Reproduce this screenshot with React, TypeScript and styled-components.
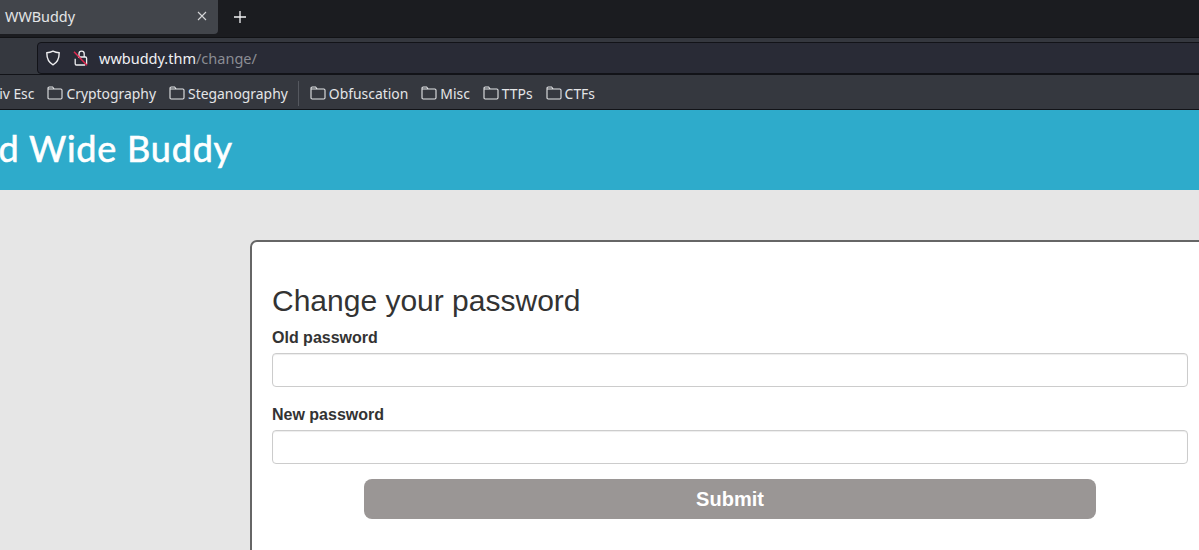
import { createGlobalStyle, styled } from "styled-components";

const GlobalStyle = createGlobalStyle`
  html, body {
    margin: 0;
    padding: 0;
    overflow: hidden;
    background: #e6e6e6;
  }
  * {
    box-sizing: border-box;
  }
`;

const Window = styled.div`
  width: 1199px;
  height: 550px;
  overflow: hidden;
  display: flex;
  flex-direction: column;
`;

const TabStrip = styled.div`
  flex: 0 0 38px;
  background-color: #1b1c20;
  border-bottom: 1px solid #111215;
  display: flex;
  align-items: flex-start;
  font-family: "Noto Sans", sans-serif;
`;

const Tab = styled.div`
  width: 218px;
  height: 34px;
  background-color: #42454b;
  border-radius: 0 0 4px 0;
  display: flex;
  align-items: center;
  justify-content: space-between;
  padding: 0 11px 2px 5px;
  color: #e4e5e7;
  font-size: 14.4px;
`;

const NewTab = styled.div`
  width: 44px;
  height: 34px;
  display: flex;
  align-items: center;
  justify-content: center;
`;

const NavBar = styled.div`
  flex: 0 0 36px;
  background-color: #35383f;
  padding: 4px 0 0 37px;
  display: flex;
`;

const UrlBar = styled.div`
  flex: 1;
  height: 32px;
  margin-right: -20px;
  background-color: #292b36;
  border: 1px solid #121318;
  border-radius: 4px;
  display: flex;
  align-items: center;
  padding-left: 7px;
  font-family: "Noto Sans", sans-serif;
  font-size: 14.5px;
  color: #f0f0f3;
`;

const UrlIcons = styled.div`
  display: flex;
  align-items: center;
  gap: 12px;
  margin-right: 10px;
`;

const UrlPath = styled.span`
  color: #8b8d94;
`;

const BookmarkBar = styled.div`
  flex: 0 0 36px;
  background-color: #35383f;
  border-top: 1px solid #121318;
  border-bottom: 1px solid #121318;
  display: flex;
  align-items: center;
  overflow: hidden;
  padding-top: 2px;
  font-family: "Noto Sans", sans-serif;
  font-size: 13.9px;
  color: #e4e5e7;
`;

const ClippedLabel = styled.span`
  margin-left: -15px;
  margin-right: 13px;
`;

const Bookmark = styled.div`
  display: flex;
  align-items: center;
  gap: 3px;
  margin-right: 13px;
`;

const Separator = styled.div`
  width: 1px;
  height: 25px;
  background-color: #55585f;
  margin: 0 11px 0 -3px;
`;

const Header = styled.div`
  flex: 0 0 80px;
  background-color: #2eabcb;
  display: flex;
  align-items: center;
  overflow: hidden;
  padding-bottom: 4px;
`;

const SiteTitle = styled.h1`
  margin: 0 0 0 -82px;
  font-family: "Lato", sans-serif;
  font-size: 36px;
  font-weight: 400;
  -webkit-text-stroke: 0.6px #ffffff;
  color: #ffffff;
  white-space: nowrap;
  letter-spacing: 0.8px;
`;

const Main = styled.div`
  flex: 1;
  padding: 50px 0 0 250px;
  background-color: #e6e6e6;
  min-height: 0;
`;

const Card = styled.div`
  width: 960px;
  height: 400px;
  background-color: #ffffff;
  border: 2px solid #666666;
  border-radius: 7px;
  padding: 41px 20px 0;
  font-family: "Liberation Sans", Arial, sans-serif;
  color: #333333;
`;

const Heading = styled.h2`
  margin: 0 0 8px;
  font-size: 30px;
  font-weight: 400;
  line-height: 36px;
`;

const Field = styled.div`
  margin-bottom: 15px;

  & + & {
    margin-top: 17px;
  }
`;

const Label = styled.label`
  display: block;
  margin-bottom: 4px;
  font-size: 16px;
  font-weight: 700;
  line-height: 22px;
  height: 22px;
`;

const Input = styled.input`
  display: block;
  width: 916px;
  height: 34px;
  border: 1px solid #cccccc;
  border-radius: 4px;
  background-color: #ffffff;
  box-shadow: inset 0 1px 1px rgba(0, 0, 0, 0.075);
  padding: 6px 12px;
`;

const SubmitButton = styled.button`
  display: block;
  width: 732px;
  height: 40px;
  margin: 0 0 0 92px;
  border: none;
  border-radius: 8px;
  background-color: #9a9695;
  color: #ffffff;
  font-family: "Liberation Sans", Arial, sans-serif;
  font-size: 20px;
  font-weight: 700;
`;

const CloseIcon = () => (
  <svg width="10" height="10" viewBox="0 0 10 10" fill="none" stroke="#d5d6d8" strokeWidth="1.1">
    <path d="M1 1l8 8M9 1l-8 8" />
  </svg>
);

const PlusIcon = () => (
  <svg width="12" height="12" viewBox="0 0 12 12" fill="none" stroke="#f2f2f3" strokeWidth="1.3">
    <path d="M6 0v12M0 6h12" />
  </svg>
);

const ShieldIcon = () => (
  <svg width="16" height="16" viewBox="0 0 16 16" fill="none" stroke="#eeeef0" strokeWidth="1.4">
    <path d="M8 1.2c2 1 4 1.5 6.2 1.6 0 5.2-1.5 9.6-6.2 12-4.7-2.4-6.2-6.8-6.2-12C4 2.7 6 2.2 8 1.2z" />
  </svg>
);

const BrokenLockIcon = () => (
  <svg width="16" height="16" viewBox="0 0 16 16" fill="none">
    <path d="M6 7V3.8a2.6 2.6 0 0 1 5.2 0V7" stroke="#eeeef0" strokeWidth="1.3" />
    <path d="M2.2 8.8V13.8c0 .7.5 1.2 1.2 1.2h8.8M13.6 14V8.2c0-.7-.5-1.2-1.2-1.2H5" stroke="#eeeef0" strokeWidth="1.3" />
    <path d="M1 1.8l13 13.4" stroke="#e22850" strokeWidth="1.5" />
  </svg>
);

const FolderIcon = () => (
  <svg width="16" height="14" viewBox="0 0 16 14" fill="none" stroke="#e4e5e7" strokeWidth="1.1">
    <path d="M1 3V2.2C1 1.5 1.5 1 2.2 1h3.4l1.6 2h6.6c.7 0 1.2.5 1.2 1.2v7.6c0 .7-.5 1.2-1.2 1.2H2.2C1.5 13 1 12.5 1 11.8V3h5.8" />
  </svg>
);

const firstBookmarks = ["Cryptography", "Steganography"];
const lastBookmarks = ["Obfuscation", "Misc", "TTPs", "CTFs"];

const App = () => {
  return (
    <>
      <GlobalStyle />
      <Window>
        <TabStrip>
          <Tab>
            WWBuddy
            <CloseIcon />
          </Tab>
          <NewTab>
            <PlusIcon />
          </NewTab>
        </TabStrip>
        <NavBar>
          <UrlBar>
            <UrlIcons>
              <ShieldIcon />
              <BrokenLockIcon />
            </UrlIcons>
            wwbuddy.thm<UrlPath>/change/</UrlPath>
          </UrlBar>
        </NavBar>
        <BookmarkBar>
          <ClippedLabel>Priv Esc</ClippedLabel>
          {firstBookmarks.map((name) => (
            <Bookmark key={name}>
              <FolderIcon />
              {name}
            </Bookmark>
          ))}
          <Separator />
          {lastBookmarks.map((name) => (
            <Bookmark key={name}>
              <FolderIcon />
              {name}
            </Bookmark>
          ))}
        </BookmarkBar>
        <Header>
          <SiteTitle>World Wide Buddy</SiteTitle>
        </Header>
        <Main>
          <Card>
            <Heading>Change your password</Heading>
            <Field>
              <Label>Old password</Label>
              <Input type="password" />
            </Field>
            <Field>
              <Label>New password</Label>
              <Input type="password" />
            </Field>
            <SubmitButton>Submit</SubmitButton>
          </Card>
        </Main>
      </Window>
    </>
  );
};

export default App;
